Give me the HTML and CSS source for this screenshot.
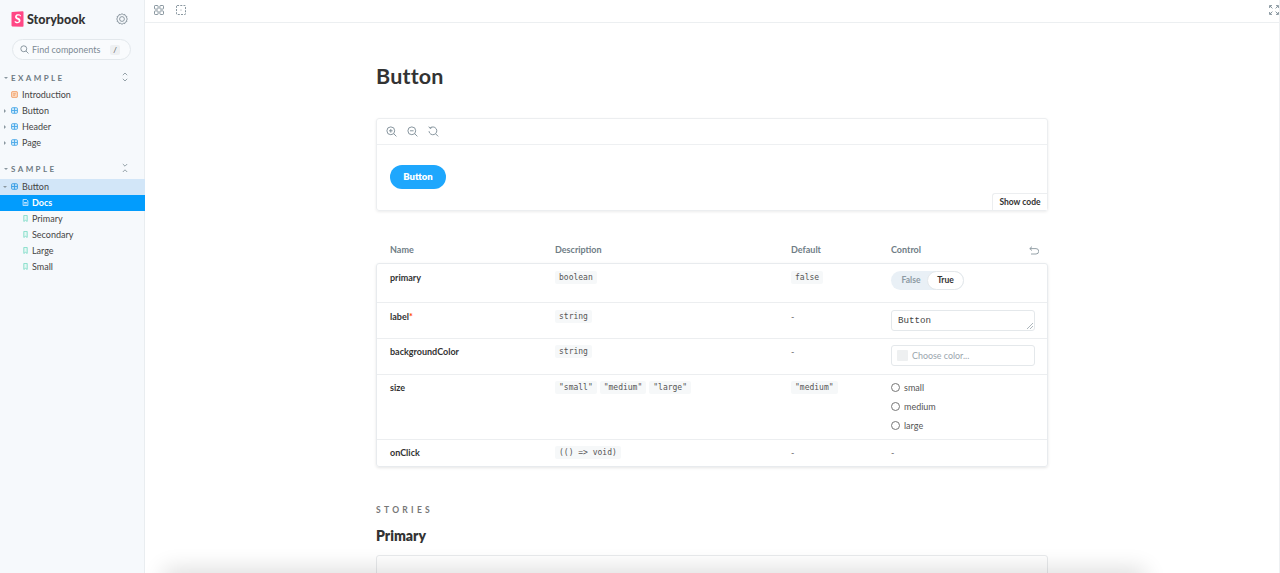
FILE: index.html
```html
<!DOCTYPE html>
<html>
	<head>
		<title>Button - Docs</title>
		<link rel="stylesheet" href="styles.css">
	</head>
	<body>
		<aside class="sidebar">
			<div class="brand">
				<svg class="logo" width="13" height="16" viewBox="0 0 12 16"><path d="M0.6 0.9 L11.2 0.2 Q12 0.2 12 1 V15 Q12 15.8 11.2 15.8 L0.8 15.4 Q0 15.4 0 14.6 V1.6 Q0 0.9 0.6 0.9Z" fill="#ff4785"/><path d="M8.4 5.2 C8.4 4.5 6.2 4.4 5.6 4.9 C4.9 5.5 5.4 6.2 6.6 6.8 C8.4 7.6 9 8.3 9 9.6 C9 11.4 7.4 12.2 5.9 12.2 C4.4 12.2 3 11.6 3 10.2 H4.5 C4.5 11 6.9 11.3 7.3 10.2 C7.6 9.3 6.6 8.9 5.6 8.4 C4.3 7.8 3.4 7 3.6 5.5 C3.8 3.9 5.2 3.3 6.4 3.3 C8 3.3 9.6 3.9 9.6 5.2Z" fill="#fff"/></svg>
				<span class="brand-name">Storybook</span>
				<svg class="gear" width="12" height="12" viewBox="0 0 12 12" fill="none" stroke="#73828c" stroke-width=".8"><path d="M6 .6 L7.2 1.7 L8.8 1.4 L9.3 3 L10.9 3.5 L10.5 5 L11.5 6 L10.5 7 L10.9 8.5 L9.3 9 L8.8 10.6 L7.2 10.3 L6 11.4 L4.8 10.3 L3.2 10.6 L2.7 9 L1.1 8.5 L1.5 7 L.5 6 L1.5 5 L1.1 3.5 L2.7 3 L3.2 1.4 L4.8 1.7Z"/><circle cx="6" cy="6" r="2.4"/></svg>
			</div>

			<div class="search">
				<svg width="9" height="9" viewBox="0 0 10 10" fill="none" stroke="#73828c" stroke-width=".9"><circle cx="4.2" cy="4.2" r="3.3"/><path d="M6.7 6.7 L9.4 9.4"/></svg>
				<span class="search-text">Find components</span>
				<span class="search-key">/</span>
			</div>

			<div class="group-title">
				<i class="caret open"></i><span>EXAMPLE</span>
				<svg class="expand" width="6" height="10" viewBox="0 0 6 10" fill="none" stroke="#8a979f" stroke-width=".9"><path d="M.8 3.2 L3 1 L5.2 3.2 M.8 6.8 L3 9 L5.2 6.8"/></svg>
			</div>
			<div class="item"><svg class="ic" viewBox="0 0 10 10" fill="#fde3cf" stroke="#f0965a"><rect x="1" y="1" width="8" height="8" rx=".6"/><path d="M3 4 H7 M3 6 H6"/></svg>Introduction</div>
			<div class="item"><i class="caret"></i><svg class="ic" viewBox="0 0 10 10" fill="#d3ecfb" stroke="#4aa8e8"><rect x=".8" y="1" width="8.4" height="8" rx="1.4"/><path d="M5 1 V9 M1 5 H9"/></svg>Button</div>
			<div class="item"><i class="caret"></i><svg class="ic" viewBox="0 0 10 10" fill="#d3ecfb" stroke="#4aa8e8"><rect x=".8" y="1" width="8.4" height="8" rx="1.4"/><path d="M5 1 V9 M1 5 H9"/></svg>Header</div>
			<div class="item"><i class="caret"></i><svg class="ic" viewBox="0 0 10 10" fill="#d3ecfb" stroke="#4aa8e8"><rect x=".8" y="1" width="8.4" height="8" rx="1.4"/><path d="M5 1 V9 M1 5 H9"/></svg>Page</div>

			<div class="group-title second">
				<i class="caret open"></i><span>SAMPLE</span>
				<svg class="expand" width="6" height="10" viewBox="0 0 6 10" fill="none" stroke="#8a979f" stroke-width=".9"><path d="M.8 1 L3 3.2 L5.2 1 M.8 9 L3 6.8 L5.2 9"/></svg>
			</div>
			<div class="item parent"><i class="caret open"></i><svg class="ic" viewBox="0 0 10 10" fill="#b9def7" stroke="#3a9ee4"><rect x=".8" y="1" width="8.4" height="8" rx="1.4"/><path d="M5 1 V9 M1 5 H9"/></svg>Button</div>
			<div class="item child active"><svg class="ic" viewBox="0 0 8 10" fill="none" stroke="#cfeaff"><path d="M.6 .6 H5.4 L7.4 2.6 V9.4 H.6Z"/><path d="M2 5 H6 M2 7 H6"/></svg>Docs</div>
			<div class="item child"><svg class="ic" viewBox="0 0 6 10" fill="#e6f8f4" stroke="#7fdcc8"><path d="M.6 .6 H5.4 V9.2 L3 7.6 L.6 9.2Z"/></svg>Primary</div>
			<div class="item child"><svg class="ic" viewBox="0 0 6 10" fill="#e6f8f4" stroke="#7fdcc8"><path d="M.6 .6 H5.4 V9.2 L3 7.6 L.6 9.2Z"/></svg>Secondary</div>
			<div class="item child"><svg class="ic" viewBox="0 0 6 10" fill="#e6f8f4" stroke="#7fdcc8"><path d="M.6 .6 H5.4 V9.2 L3 7.6 L.6 9.2Z"/></svg>Large</div>
			<div class="item child"><svg class="ic" viewBox="0 0 6 10" fill="#e6f8f4" stroke="#7fdcc8"><path d="M.6 .6 H5.4 V9.2 L3 7.6 L.6 9.2Z"/></svg>Small</div>
		</aside>

		<div class="main">
			<div class="toolbar">
				<svg width="10" height="10" viewBox="0 0 10 10" fill="none" stroke="#7b8a94" stroke-width=".9"><rect x=".5" y=".5" width="3.6" height="3.6" rx=".7"/><rect x="5.9" y=".5" width="3.6" height="3.6" rx=".7"/><rect x=".5" y="5.9" width="3.6" height="3.6" rx=".7"/><rect x="5.9" y="5.9" width="3.6" height="3.6" rx=".7"/></svg>
				<svg width="10" height="10" viewBox="0 0 10 10" fill="none" stroke="#7b8a94" stroke-width=".9"><rect x=".5" y=".5" width="9" height="9" rx=".6" stroke-dasharray="2 1.2"/><circle cx="5" cy="5" r=".5" fill="#7b8a94" stroke="none"/></svg>
				<svg class="fullscreen" width="10" height="10" viewBox="0 0 10 10" fill="none" stroke="#7b8a94" stroke-width=".9"><path d="M.6 3 V.6 H3 M7 .6 H9.4 V3 M.6 7 V9.4 H3 M7 9.4 H9.4 V7 M.8 .8 L3.4 3.4 M9.2 .8 L6.6 3.4 M.8 9.2 L3.4 6.6 M9.2 9.2 L6.6 6.6"/></svg>
			</div>

			<div class="docs">
				<h1>Button</h1>

				<div class="preview">
					<div class="preview-bar">
						<svg width="11" height="11" viewBox="0 0 11 11" fill="none" stroke="#7b8a94" stroke-width=".9"><circle cx="4.8" cy="4.8" r="3.9"/><path d="M7.7 7.7 L10.4 10.4 M3 4.8 H6.6 M4.8 3 V6.6"/></svg>
						<svg width="11" height="11" viewBox="0 0 11 11" fill="none" stroke="#7b8a94" stroke-width=".9"><circle cx="4.8" cy="4.8" r="3.9"/><path d="M7.7 7.7 L10.4 10.4 M3 4.8 H6.6"/></svg>
						<svg width="11" height="11" viewBox="0 0 11 11" fill="none" stroke="#7b8a94" stroke-width=".9"><path d="M2 2.2 A3.9 3.9 0 1 1 1 5.2 M.8 .6 L2 2.4 L3.8 1.6 M7.7 7.9 L10.2 10.4"/></svg>
					</div>
					<div class="preview-stage">
						<span class="demo-button">Button</span>
						<span class="show-code">Show code</span>
					</div>
				</div>

				<div class="table-head">
					<span>Name</span>
					<span>Description</span>
					<span>Default</span>
					<span class="control-head">Control
						<svg width="10" height="9" viewBox="0 0 10 9" fill="none" stroke="#8a979f" stroke-width=".9"><path d="M3 .6 L.8 2.6 L3 4.6 M.8 2.6 H7 A2.6 2.6 0 0 1 7 8 H2"/></svg>
					</span>
				</div>
				<div class="table">
					<div class="row row-primary">
						<b>primary</b>
						<div><code>boolean</code></div>
						<div><code>false</code></div>
						<div class="toggle"><span class="off">False</span><span class="on">True</span></div>
					</div>
					<div class="row row-label">
						<b>label<em>*</em></b>
						<div><code>string</code></div>
						<div class="dash">-</div>
						<div class="field mono">Button<svg width="6" height="6" viewBox="0 0 6 6" stroke="#8a979f" stroke-width=".7"><path d="M0 6 L6 0 M3 6 L6 3"/></svg></div>
					</div>
					<div class="row row-color">
						<b>backgroundColor</b>
						<div><code>string</code></div>
						<div class="dash">-</div>
						<div class="field color"><i class="swatch"></i>Choose color...</div>
					</div>
					<div class="row row-size">
						<b>size</b>
						<div class="codes"><code>"small"</code><code>"medium"</code><code>"large"</code></div>
						<div><code>"medium"</code></div>
						<div class="radios">
							<div class="radio"><i></i>small</div>
							<div class="radio"><i></i>medium</div>
							<div class="radio"><i></i>large</div>
						</div>
					</div>
					<div class="row row-click">
						<b>onClick</b>
						<div><code>(() =&gt; void)</code></div>
						<div class="dash">-</div>
						<div class="dash">-</div>
					</div>
				</div>

				<div class="stories-label">STORIES</div>
				<h2>Primary</h2>
				<div class="next-preview"></div>
			</div>
			<div class="bottom-shadow"></div>
		</div>
	</body>
</html>
```

FILE: styles.css
```css
html, body {
	margin: 0;
	height: 573px;
	overflow: hidden;
}

body {
	display: flex;
	background: white;
	color: #333;
	font-family: 'Lato', 'Noto Sans', sans-serif;
	font-size: 9px;
}

/* sidebar */

.sidebar {
	width: 145px;
	flex: none;
	background: #f6f9fc;
	box-shadow: inset -1px 0 0 #e9edf0;
}

.brand {
	display: flex;
	align-items: center;
	height: 16px;
	padding: 11px 17px 0 11px;
}

.logo {
	flex: none;
}

.brand-name {
	margin-left: 3px;
	font-size: 12.5px;
	font-weight: 900;
	color: #333;
	flex: 1;
}

.search {
	display: flex;
	align-items: center;
	height: 19px;
	margin: 12px 14px 0 12px;
	padding-left: 7px;
	background: #f9fbfd;
	border: 1px solid #e3e8ec;
	border-radius: 11px;
	color: #7c8a94;
	font-size: 9px;
}

.search-text {
	margin-left: 3px;
	flex: 1;
}

.search-key {
	width: 10px;
	height: 10px;
	margin-right: 10px;
	line-height: 10px;
	text-align: center;
	background: #eef0f2;
	border-radius: 2px;
	font-size: 8px;
	color: #555;
}

.group-title {
	position: relative;
	display: flex;
	align-items: center;
	height: 18px;
	margin-top: 9px;
	padding-left: 4px;
	font-size: 8px;
	font-weight: 700;
	letter-spacing: 2.4px;
	color: #6d7a83;
}

.expand {
	position: absolute;
	right: 17px;
	top: 3px;
}

.caret {
	flex: none;
	width: 0;
	height: 0;
	margin-right: 3px;
	border-left: 2px solid #8a979f;
	border-top: 2px solid transparent;
	border-bottom: 2px solid transparent;
}

.caret.open {
	border-left: 2px solid transparent;
	border-right: 2px solid transparent;
	border-top: 2px solid #8a979f;
	border-bottom: 0;
	margin-right: 3px;
}

.item {
	display: flex;
	align-items: center;
	box-sizing: border-box;
	height: 16.1px;
	padding-left: 11px;
	padding-bottom: 1px;
	font-size: 9px;
	color: #444;
}

.item .caret {
	margin-left: -7px;
	margin-right: 5px;
}

.item .caret.open {
	margin-left: -8px;
	margin-right: 4px;
}

.ic {
	flex: none;
	width: 7px;
	height: 7px;
	margin-right: 4px;
	stroke-width: 1.3;
}

.parent {
	background: #d2e6f8;
	margin-top: .6px;
}

.child {
	padding-left: 22px;
}

.child .ic {
	margin-right: 3px;
}

.active {
	background: #029cfd;
	color: white;
	font-weight: 700;
}

/* main area */

.main {
	position: relative;
	flex: 1;
	min-width: 0;
	height: 573px;
	overflow: hidden;
	border-right: 1px solid #eef0f2;
}

.toolbar {
	display: flex;
	align-items: center;
	gap: 12px;
	height: 19px;
	padding: 0 0 3px 9px;
	border-bottom: 1px solid #eceff1;
}

.fullscreen {
	margin-left: auto;
}

.docs {
	width: 672px;
	margin-left: 231px;
}

h1 {
	margin: 0;
	padding-top: 39px;
	height: 56px;
	line-height: 29px;
	font-size: 21.5px;
	font-weight: 700;
	color: #333;
	letter-spacing: .2px;
}

.preview {
	height: 91px;
	border: 1px solid #eceef0;
	border-radius: 3px;
	box-shadow: 0 1px 3px rgba(0,0,0,.08);
}

.preview-bar {
	display: flex;
	align-items: center;
	gap: 10px;
	height: 25px;
	padding-left: 9px;
	border-bottom: 1px solid #eef0f2;
}

.preview-stage {
	position: relative;
	height: 65px;
	padding: 20px 0 0 13px;
	box-sizing: border-box;
}

.demo-button {
	display: inline-block;
	width: 56px;
	height: 24px;
	line-height: 24px;
	text-align: center;
	border-radius: 12px;
	background: #1ea7fd;
	color: white;
	font-size: 9.5px;
	font-weight: 800;
}

.show-code {
	position: absolute;
	right: 0;
	bottom: 0;
	width: 54px;
	height: 16px;
	line-height: 16px;
	text-align: center;
	background: white;
	border-left: 1px solid #eceef0;
	border-top: 1px solid #eceef0;
	border-top-left-radius: 3px;
	font-size: 8.5px;
	font-weight: 700;
	color: #333;
}

.table-head {
	display: grid;
	grid-template-columns: 165px 236px 100px 1fr;
	margin-top: 33px;
	height: 19px;
	padding: 0 9px 0 14px;
	line-height: 12px;
	font-size: 9px;
	font-weight: 700;
	color: #6f7d86;
}

.control-head {
	display: flex;
	justify-content: space-between;
	align-items: center;
	height: 12px;
}

.table {
	border: 1px solid #e8ebee;
	border-radius: 3px;
	box-shadow: 0 1px 3px rgba(0,0,0,.1);
}

.row {
	display: grid;
	grid-template-columns: 165px 236px 100px 1fr;
	box-sizing: border-box;
	padding: 6px 13px 0 13px;
	border-top: 1px solid #eceef0;
	font-size: 9px;
}

.row:first-child {
	border-top: 0;
}

.row b {
	font-weight: 700;
	line-height: 14px;
}

.row em {
	font-style: normal;
	color: #ff4400;
}

.row-primary { height: 38px; padding-top: 7px; }
.row-label { height: 36px; padding-top: 7px; }
.row-color { height: 36px; }
.row-size { height: 65px; }
.row-click { height: 27px; }

code {
	display: inline-block;
	height: 13px;
	line-height: 13px;
	padding: 0 4px;
	background: #f6f8f9;
	border-radius: 2px;
	font-family: 'DejaVu Sans Mono', 'Liberation Mono', monospace;
	font-size: 8px;
	color: #555;
}

.codes code {
	margin-right: 3px;
}

.dash {
	line-height: 14px;
	color: #666;
}

.toggle {
	display: flex;
	box-sizing: border-box;
	width: 73px;
	height: 19px;
	padding-left: 4px;
	background: #e9f0f6;
	border-radius: 10px;
	line-height: 19px;
	font-size: 8.5px;
	font-weight: 700;
	text-align: center;
}

.off {
	width: 32px;
	color: #8c9aa3;
}

.on {
	flex: 1;
	background: white;
	border: 1px solid #e4e8eb;
	border-radius: 10px;
	line-height: 17px;
	color: #333;
}

.field {
	position: relative;
	box-sizing: border-box;
	width: 144px;
	height: 21px;
	padding-left: 6px;
	line-height: 19px;
	background: white;
	border: 1px solid #e4e8eb;
	border-radius: 3px;
}

.field svg {
	position: absolute;
	right: 1px;
	bottom: 1px;
}

.mono {
	font-family: 'Liberation Mono', monospace;
	font-size: 9.2px;
	color: #444;
}

.color {
	display: flex;
	align-items: center;
	padding-left: 5px;
	color: #9aa5ad;
	font-size: 8.9px;
}

.swatch {
	width: 11px;
	height: 11px;
	margin-right: 4px;
	background: #eef0f1;
	border-radius: 1px;
}

.radios {
	margin-top: -3.5px;
}

.radio {
	display: flex;
	align-items: center;
	height: 19px;
	color: #555;
}

.radio i {
	width: 7px;
	height: 7px;
	margin-right: 4px;
	background: white;
	border: 1px solid #777;
	border-radius: 50%;
}

.stories-label {
	margin-top: 37px;
	height: 12px;
	line-height: 12px;
	font-size: 8.5px;
	font-weight: 700;
	letter-spacing: 3.3px;
	color: #777;
}

h2 {
	margin: 10px 0 0;
	height: 29px;
	line-height: 20px;
	font-size: 14px;
	font-weight: 800;
	color: #333;
}

.next-preview {
	height: 60px;
	border: 1px solid #e8eaec;
	border-radius: 3px;
}

.bottom-shadow {
	position: absolute;
	left: 25px;
	right: 140px;
	top: 575px;
	height: 10px;
	box-shadow: 0 0 22px 6px rgba(0,0,0,.14);
}
```
